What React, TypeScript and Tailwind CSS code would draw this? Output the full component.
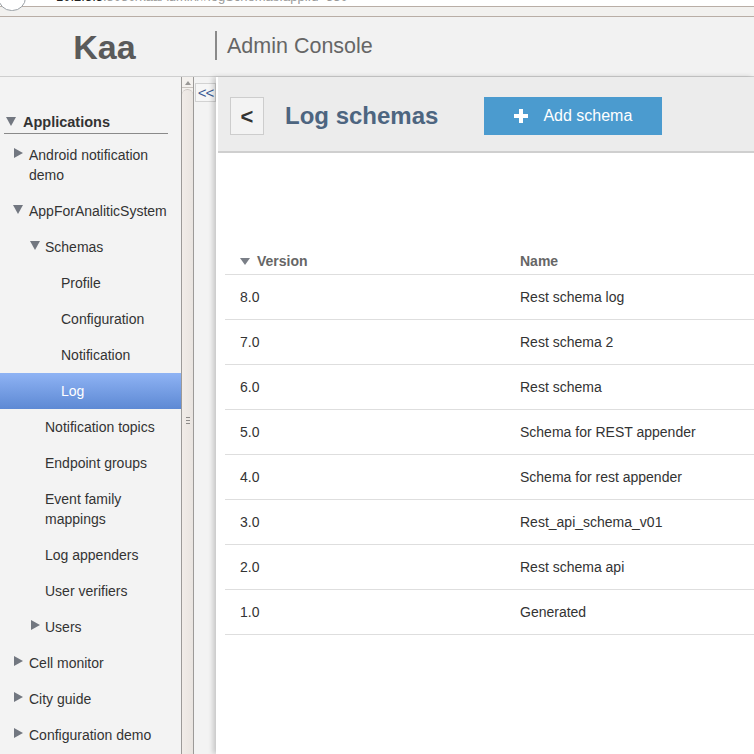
import React from 'react';

type Node = {
  label: string;
  lines?: string[];
  level: number;
  arrow?: 'right' | 'down';
  selected?: boolean;
};

const tree: Node[] = [
  { label: 'Android notification demo', lines: ['Android notification', 'demo'], level: 1, arrow: 'right' },
  { label: 'AppForAnaliticSystem', level: 1, arrow: 'down' },
  { label: 'Schemas', level: 2, arrow: 'down' },
  { label: 'Profile', level: 3 },
  { label: 'Configuration', level: 3 },
  { label: 'Notification', level: 3 },
  { label: 'Log', level: 3, selected: true },
  { label: 'Notification topics', level: 2 },
  { label: 'Endpoint groups', level: 2 },
  { label: 'Event family mappings', lines: ['Event family', 'mappings'], level: 2 },
  { label: 'Log appenders', level: 2 },
  { label: 'User verifiers', level: 2 },
  { label: 'Users', level: 2, arrow: 'right' },
  { label: 'Cell monitor', level: 1, arrow: 'right' },
  { label: 'City guide', level: 1, arrow: 'right' },
  { label: 'Configuration demo', level: 1, arrow: 'right' },
];

const schemas = [
  ['8.0', 'Rest schema log'],
  ['7.0', 'Rest schema 2'],
  ['6.0', 'Rest schema'],
  ['5.0', 'Schema for REST appender'],
  ['4.0', 'Schema for rest appender'],
  ['3.0', 'Rest_api_schema_v01'],
  ['2.0', 'Rest schema api'],
  ['1.0', 'Generated'],
];

const Arrow = ({ dir, className }: { dir: 'right' | 'down'; className?: string }) => (
  <svg width="10" height="10" viewBox="0 0 10 10" className={className}>
    {dir === 'right' ? (
      <polygon points="1,0 10,5 1,10" fill="#727780" />
    ) : (
      <polygon points="0,1 10,1 5,10" fill="#727780" />
    )}
  </svg>
);

const TreeItem = ({ node }: { node: Node }) => {
  const textLeft = node.level === 1 ? 'pl-[29px]' : node.level === 2 ? 'pl-[45px]' : 'pl-[61px]';
  const arrowLeft = node.level === 1 ? 'left-[13px]' : 'left-[30px]';
  return (
    <div
      className={`relative py-[8px] leading-[20px] text-[14px] ${textLeft} ${
        node.selected ? 'bg-gradient-to-b from-[#8fb3f4] to-[#5d89d4] text-white' : 'text-[#333]'
      }`}
    >
      {node.arrow && <Arrow dir={node.arrow} className={`absolute top-[11px] ${arrowLeft}`} />}
      {node.lines ? node.lines.map((l) => <div key={l}>{l}</div>) : node.label}
    </div>
  );
};

export default function App() {
  return (
    <div className="w-[754px] h-[754px] overflow-hidden flex flex-col bg-[#f3f3f3] font-['Liberation_Sans',Arial,sans-serif]">
      {/* browser chrome fragment */}
      <div className="relative h-[17px] flex-shrink-0 bg-[#f2f1ef] border-b border-[#b9aea6]">
        <div className="h-[7px] bg-white border-b border-[#b9aea6] overflow-hidden flex">
          <span className="pl-[56px] -mt-[10px] text-[13px] leading-[14px] whitespace-nowrap">
            <span className="text-[#222]">10.2.3.5</span>
            <span className="text-[#999]">:8080/kaaAdmin/#logSchemas:applId=530</span>
          </span>
        </div>
        <div className="absolute -left-[2px] -top-[16px] w-[28px] h-[27px] rounded-full border border-[#9aa0a6] bg-white" />
      </div>

      {/* app header */}
      <header className="h-[60px] flex-shrink-0 flex items-center bg-[#f2f2f2] border-b border-[#cfcfcf]">
        <div className="w-[209px] text-center text-[34px] font-bold text-[#5a5a5a] leading-none">Kaa</div>
        <div className="ml-[6px] w-[2px] h-[29px] bg-[#8a8a8a] -mt-[2px]" />
        <div className="ml-[10px] text-[21.5px] text-[#666]">Admin Console</div>
      </header>

      <div className="flex flex-1 min-h-0">
        {/* sidebar tree */}
        <aside className="w-[181px] flex-shrink-0 bg-[#f3f3f3] pt-[35px] overflow-hidden">
          <div className="relative ml-[4px] mr-[13px] pl-[19px] leading-[20px] text-[14.5px] font-bold text-[#333] border-b border-[#8a8a8a] pb-px">
            <Arrow dir="down" className="absolute left-[2px] top-[4px]" />
            Applications
          </div>
          <div className="mt-[3px]">
            {tree.map((n) => (
              <TreeItem key={n.label} node={n} />
            ))}
          </div>
        </aside>

        {/* scrollbar */}
        <div className="w-[13px] flex-shrink-0 flex flex-col border-x border-[#9c9a98] bg-[#f4f1ee]">
          <div className="h-[11px] flex items-start justify-center rounded-t-[6px] border-b border-[#c9c4bf]">
            <svg width="6" height="4" viewBox="0 0 6 4" className="mt-[4px]">
              <polygon points="0,4 6,4 3,0" fill="#9a9896" />
            </svg>
          </div>
          <div className="flex-1 mt-[1px] rounded-t-[6px] border-t border-[#c9c4bf] bg-gradient-to-r from-[#f1ece8] to-[#e9e4e0] flex flex-col items-center">
            <div className="mt-[327px] flex flex-col gap-[2px]">
              <div className="w-[4px] h-px bg-[#8d8b89]" />
              <div className="w-[4px] h-px bg-[#8d8b89]" />
              <div className="w-[4px] h-px bg-[#8d8b89]" />
            </div>
          </div>
        </div>

        {/* collapse column */}
        <div className="w-[22px] flex-shrink-0 bg-[#f3f3f3] pt-[6px] pl-px">
          <div className="w-[21px] h-[19px] border border-[#d2d2d2] bg-[#f6f6f6] flex items-center justify-center text-[15px] leading-none tracking-[-1px] text-[#3a5b95]">
            &lt;&lt;
          </div>
        </div>

        {/* main panel */}
        <main className="flex-1 min-w-0 flex flex-col bg-white pl-[2px] shadow-[-3px_0_5px_rgba(0,0,0,0.18)]">
          <div className="h-[76px] flex-shrink-0 bg-[#ececec] border-b-2 border-[#cfcfcf] flex items-start pt-[20px]">
            <div className="ml-[12px] w-[34px] h-[38px] border border-[#cdcdcd] bg-[#f3f3f3] flex items-center justify-center text-[22px] text-[#333] font-bold">
              &lt;
            </div>
            <div className="ml-[21px] h-[38px] flex items-center text-[24px] font-bold text-[#4d6580]">Log schemas</div>
            <button className="ml-[46px] w-[178px] h-[38px] bg-[#4b9bcf] text-white flex items-center text-[16px]">
              <svg width="14" height="14" viewBox="0 0 14 14" className="ml-[30px]">
                <rect x="5" y="0" width="4" height="14" fill="white" />
                <rect x="0" y="5" width="14" height="4" fill="white" />
              </svg>
              <span className="ml-[15px]">Add schema</span>
            </button>
          </div>

          <div className="mt-[96px] ml-[7px] text-[14px]">
            <div className="h-[26px] flex items-center border-b border-[#dedede] font-bold text-[#666]">
              <div className="w-[295px] pl-[15px] flex items-center">
                <svg width="10" height="7" viewBox="0 0 10 7">
                  <polygon points="0,0 10,0 5,7" fill="#7a7f87" />
                </svg>
                <span className="ml-[7px]">Version</span>
              </div>
              <div>Name</div>
            </div>
            {schemas.map(([v, n]) => (
              <div key={v} className="h-[45px] flex items-center border-b border-[#dedede] text-[#333]">
                <div className="w-[295px] pl-[15px]">{v}</div>
                <div>{n}</div>
              </div>
            ))}
          </div>
        </main>
      </div>
    </div>
  );
}
